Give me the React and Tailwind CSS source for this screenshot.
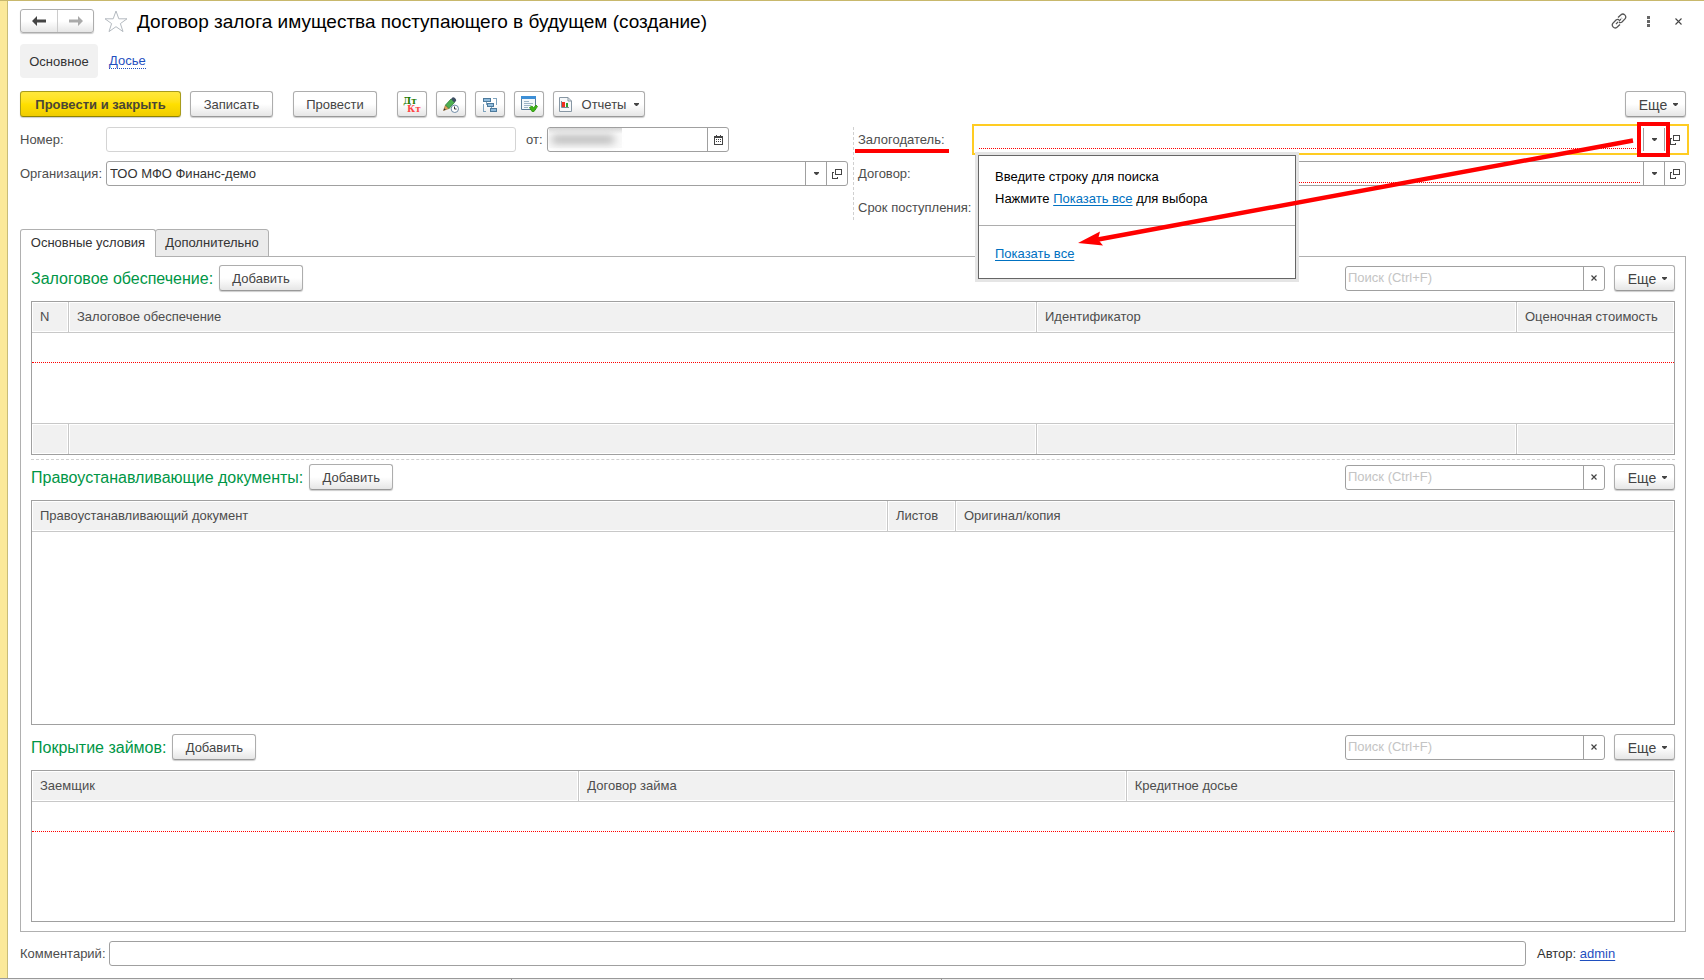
import React from 'react';
import clsx from 'clsx';

const Caret = () => (
    <svg width="5" height="3" viewBox="0 0 5 3" className="shrink-0" aria-hidden="true">
        <path d="M0 0h5v1L3 3H2L0 1z" fill="#444" />
    </svg>
);

const OpenIcon = () => (
    <svg width="10" height="10" viewBox="0 0 10 10" fill="none" stroke="#444" shapeRendering="crispEdges" aria-hidden="true">
        <path d="M3.500 .5h6v5h-6z" />
        <path d="M2 3.500H.5v6h5V7.500" />
    </svg>
);

const CalendarIcon = () => (
    <svg width="9" height="10" viewBox="0 0 9 10" shapeRendering="crispEdges" aria-hidden="true">
        <path d="M.5 1.500h8v8h-8z" fill="#fff" stroke="#444" />
        <path d="M0 1h9v2H0zM2 0h1v1H2zM6 0h1v1H6z" fill="#444" />
        <path d="M2 4h1v1H2zM4 4h1v1H4zM6 4h1v1H6zM2 6h1v1H2zM4 6h1v1H4zM6 6h1v1H6z" fill="#444" />
    </svg>
);

const PencilIcon = () => (
    <svg width="16" height="16" viewBox="0 0 16 16" aria-hidden="true">
        <path d="M.5 13.500 2.500 8l3.500 3.500z" fill="#d9a35c" stroke="#9a6a2c" strokeWidth=".6" />
        <path d="M.5 13.500l.8-2.200 1.500 1.500z" fill="#333" />
        <path d="M2.500 8 8 2l3.500 3.500-5.500 6z" fill="#4caf50" stroke="#2b7a3a" strokeWidth=".8" />
        <path d="M8 2 9.500.5c1.500-.8 4.500 2 3.500 3.500L11.500 5.500z" fill="#3d4f63" />
        <circle cx="11.800" cy="11.800" r="3.700" fill="#fff" stroke="#6f8aa5" />
        <path d="M11.500 9.500v2.500h2" fill="none" stroke="#333" />
    </svg>
);

const StructureIcon = () => (
    <svg width="16" height="16" viewBox="0 0 16 16" fill="none" shapeRendering="crispEdges" aria-hidden="true">
        <path d="M4.500 4v4M9.500 9v4M4.500 7.500H6M9 12.500h1M11 1.500h3.500V8M4 14.500H1.500V7" stroke="#7fa3bd" />
        <path d="M1.500 1.500h7v3h-7zM5.500 6.500h6v3h-6zM8.500 11.500h6v3h-6z" fill="#8fbbdc" stroke="#4d7a9c" />
    </svg>
);

const TaskIcon = () => (
    <svg width="17" height="17" viewBox="0 0 17 17" aria-hidden="true">
        <path d="M.5 .5h14v13H.5z" fill="#f4f8fb" stroke="#5c7c96" />
        <path d="M0 0h15v3H0z" fill="#3d8fd6" />
        <path d="M3 5.500h5M3 7.500h9M3 9.500h7M3 11.500h4" stroke="#9db4c6" />
        <path d="M8.500 11.500 11 10l1.500 2L15 9l1.500 1.500-3.500 5h-2z" fill="#3fb618" stroke="#2a8f0c" strokeWidth=".8" />
    </svg>
);

const ReportIcon = () => (
    <svg width="13" height="15" viewBox="0 0 13 15" aria-hidden="true">
        <path d="M.5 .5H9l3.500 3.500v10.500H.5z" fill="#f6f8fa" stroke="#8796a3" />
        <path d="M9 .5V4h3.500" fill="none" stroke="#8796a3" />
        <path d="M2.500 4v6.500H10" fill="none" stroke="#7a8894" />
        <path d="M3 5h3v5H3z" fill="#f03020" />
        <path d="M7 6h2v4H7z" fill="#2f9e2f" />
    </svg>
);

const plainButton = 'border-[#adadad] border-b-[#999] from-white from-50% to-[#e6e6e6] text-[#444]';
const primaryButton = 'border-[#a89c1c] border-b-[#8f8400] from-[#ffe83c] via-[#ffe000] to-[#f0cc00] font-bold text-[#4a4636]';

const Button = ({ primary, className, children, ...props }) => (
    <button
        type="button"
        className={clsx(
            'flex h-[26px] shrink-0 items-center justify-center whitespace-nowrap rounded-[3px] border bg-linear-to-b pt-px shadow-[0_1px_1px_#ccc]',
            primary ? primaryButton : plainButton,
            className
        )}
        {...props}
    >
        {children}
    </button>
);

const MoreButton = () => (
    <Button className="w-[61px] gap-[6px] pl-[6px] text-[14px]">
        Еще
        <Caret />
    </Button>
);

const FieldButton = ({ label, children }) => (
    <button
        type="button"
        aria-label={label}
        className="relative flex w-[21px] shrink-0 items-center justify-center border-l border-[#a0a0a0]"
    >
        {children}
    </button>
);

const Field = ({ className, children }) => (
    <div className={clsx('flex h-[25px] border bg-white', className)}>{children}</div>
);

const fieldBorder = 'rounded-[3px] border-[#a0a0a0]';

const Section = ({ title, id, children, className }) => (
    <section className={clsx('flex flex-col', className)}>
        <div className="mb-[10px] flex h-[26px] items-center">
            <h2 className="pt-px text-[16px] text-[#009646]">{title}</h2>
            <Button className="ml-[6px] w-[84px]">Добавить</Button>
            <Field className={clsx(fieldBorder, 'ml-auto w-[260px]')}>
                <input
                    id={id}
                    aria-label={`Поиск: ${title}`}
                    placeholder="Поиск (Ctrl+F)"
                    className="min-w-0 flex-1 px-[2px] outline-none placeholder:text-[#c4c4c4]"
                />
                <FieldButton label="Очистить">
                    <svg width="6" height="6" viewBox="0 0 6 6" aria-hidden="true">
                        <path d="M.5 .5l5 5M5.500 .5l-5 5" stroke="#444" strokeWidth="1.200" />
                    </svg>
                </FieldButton>
            </Field>
            <div className="ml-[9px]">
                <MoreButton />
            </div>
        </div>
        {children}
    </section>
);

// Таблица с шапкой, пустой обязательной строкой и необязательным подвалом
const DataTable = ({ columns, required, footer, className }) => {
    const cell = 'bg-[#f1f1f1] shadow-[inset_0_0_0_1px_#fff] border-[#c8c8c8] not-last:border-r';
    return (
        <div className={clsx('border border-[#a0a0a0]', className)}>
            <table className="h-full w-full table-fixed border-separate border-spacing-0">
                <thead>
                    <tr>
                        {columns.map((col) => (
                            <th
                                key={col.name}
                                scope="col"
                                className={clsx(cell, 'h-[31px] truncate border-b px-2 text-left font-normal text-[#4d4d4d]', col.width)}
                            >
                                {col.name}
                            </th>
                        ))}
                    </tr>
                </thead>
                <tbody>
                    {required && (
                        <tr>
                            <td colSpan={columns.length} className="h-[30px] border-b border-dotted border-[#f00]"></td>
                        </tr>
                    )}
                    <tr>
                        <td colSpan={columns.length}></td>
                    </tr>
                </tbody>
                {footer && (
                    <tfoot>
                        <tr>
                            {columns.map((col) => (
                                <td key={col.name} className={clsx(cell, 'h-[31px] border-t')}></td>
                            ))}
                        </tr>
                    </tfoot>
                )}
            </table>
        </div>
    );
};

const collateralColumns = [
    { name: 'N', width: 'w-[37px]' },
    { name: 'Залоговое обеспечение' },
    { name: 'Идентификатор', width: 'w-[480px]' },
    { name: 'Оценочная стоимость', width: 'w-[157px]' },
];

const documentColumns = [
    { name: 'Правоустанавливающий документ' },
    { name: 'Листов', width: 'w-[68px]' },
    { name: 'Оригинал/копия', width: 'w-[718px]' },
];

const loanColumns = [
    { name: 'Заемщик', width: 'w-1/3' },
    { name: 'Договор займа', width: 'w-1/3' },
    { name: 'Кредитное досье' },
];

const Header = () => (
    <header className="flex h-6 items-center">
        <div className="flex h-6 rounded-[3px] border border-[#adadad] bg-linear-to-b from-white from-50% to-[#e6e6e6] shadow-[0_1px_1px_#ccc]">
            <button type="button" aria-label="Назад" className="flex w-9 items-center justify-center">
                <svg width="14" height="10" viewBox="0 0 14 10" aria-hidden="true">
                    <path d="M5 0v3.500h9v3H5V10L0 5z" fill="#444" />
                </svg>
            </button>
            <button type="button" aria-label="Вперед" className="flex w-9 items-center justify-center border-l border-[#ccc]">
                <svg width="14" height="10" viewBox="0 0 14 10" aria-hidden="true">
                    <path d="M9 0v3.500H0v3h9V10l5-5z" fill="#aaa" />
                </svg>
            </button>
        </div>
        <button type="button" aria-label="В избранное" className="ml-[10px]">
            <svg width="24" height="23" viewBox="0 0 24 23" fill="#fff" stroke="#b4bac0" aria-hidden="true">
                <path d="M12 1l2.800 7.800h8.200l-6.600 4.800 2.600 8L12 16.700l-7 4.900 2.600-8L1 8.800h8.200z" />
            </svg>
        </button>
        <h1 className="ml-[9px] pt-[2px] whitespace-nowrap text-[19px] text-black">Договор залога имущества поступающего в будущем (создание)</h1>
        <div className="ml-auto flex items-center pr-1">
            <button type="button" aria-label="Ссылка">
                <svg width="16" height="16" viewBox="0 0 16 16" fill="none" stroke="#555" strokeWidth="1.300" aria-hidden="true">
                    <path d="M7 4.500 10 1.700c2.600-2 6 1.200 4.200 4L11 9c-1 .8-2 .8-3 .4" />
                    <path d="M9 11.500 6 14.300c-2.600 2-6-1.200-4.200-4L5 7c1-.8 2-.8 3-.4" />
                    <path d="M5 11l6-6" strokeDasharray="3 1" />
                </svg>
            </button>
            <button type="button" aria-label="Меню" className="ml-5">
                <svg width="3" height="11" viewBox="0 0 3 11" fill="#666" aria-hidden="true">
                    <path d="M0 0h3v3H0zM0 4h3v3H0zM0 8h3v3H0z" />
                </svg>
            </button>
            <button type="button" aria-label="Закрыть" className="ml-[25px]">
                <svg width="7" height="7" viewBox="0 0 7 7" stroke="#444" strokeWidth="1.100" aria-hidden="true">
                    <path d="M.5 .5l6 6M6.500 .5l-6 6" />
                </svg>
            </button>
        </div>
    </header>
);

const Toolbar = () => (
    <div className="mt-[13px] flex items-center">
        <Button primary className="w-[161px]">Провести и закрыть</Button>
        <Button className="ml-[9px] w-[83px]">Записать</Button>
        <Button className="ml-5 w-[84px]">Провести</Button>
        <div className="ml-5 flex gap-[9px]">
            <Button aria-label="Движения документа" className="w-[30px]">
                <span className="font-['DejaVu_Serif',serif] text-[9px] leading-[8px] font-bold">
                    <span className="block pr-1 text-[#217a00]">Дт</span>
                    <span className="block pl-1 text-[#f44]">Кт</span>
                </span>
            </Button>
            <Button aria-label="Редактировать" className="w-[30px]">
                <PencilIcon />
            </Button>
            <Button aria-label="Структура подчиненности" className="w-[30px]">
                <StructureIcon />
            </Button>
            <Button aria-label="Задачи" className="w-[30px]">
                <TaskIcon />
            </Button>
            <Button className="w-[92px] gap-2">
                <ReportIcon />
                <span className="pl-[2px]">Отчеты</span>
                <Caret />
            </Button>
        </div>
        <div className="ml-auto">
            <MoreButton />
        </div>
    </div>
);

const SearchPopup = () => (
    <div className="absolute top-[27px] left-[2px] z-10 w-[318px] border border-[#666] bg-white text-black ring-3 ring-[#e5e5e5]">
        <div className="h-[70px] border-b border-[#adadad] px-4 pt-[10px] leading-[22px]">
            <p>Введите строку для поиска</p>
            <p>
                Нажмите <a href="#all" className="text-[#0071c1] underline underline-offset-2">Показать все</a> для выбора
            </p>
        </div>
        <div className="flex h-[52px] items-center px-4 pt-1">
            <a href="#all" className="text-[#0071c1] underline underline-offset-2">Показать все</a>
        </div>
    </div>
);

const RightFields = () => (
    <div className="relative flex flex-1 flex-col gap-[9px] border-l border-dashed border-[#d0d0d0] pl-1">
        <div className="flex items-center">
            <div className="w-[117px] shrink-0">
                <label htmlFor="pledger" className="relative">
                    Залогодатель:
                    <span className="absolute top-[17px] -left-[3px] h-1 w-[94px] bg-[#f00]"></span>
                </label>
            </div>
            <Field className="relative flex-1 border-transparent outline-2 outline-offset-1 outline-[#fc2]">
                <input id="pledger" className="mr-[3px] mb-[2px] ml-[3px] min-w-0 flex-1 border-b border-dotted border-[#f00] outline-none" />
                <FieldButton label="Выбрать залогодателя">
                    <Caret />
                    <span className="absolute -top-[6px] -right-[6px] -bottom-[6px] -left-[7px] border-4 border-[#f00]"></span>
                </FieldButton>
                <FieldButton label="Открыть залогодателя">
                    <OpenIcon />
                </FieldButton>
                <SearchPopup />
            </Field>
        </div>
        <div className="flex items-center">
            <label htmlFor="contract" className="w-[117px] shrink-0">Договор:</label>
            <Field className={clsx(fieldBorder, 'flex-1')}>
                <input id="contract" className="mr-[3px] mb-[2px] ml-[3px] min-w-0 flex-1 border-b border-dotted border-[#f00] outline-none" />
                <FieldButton label="Выбрать договор">
                    <Caret />
                </FieldButton>
                <FieldButton label="Открыть договор">
                    <OpenIcon />
                </FieldButton>
            </Field>
        </div>
        <div className="flex h-[25px] items-center">Срок поступления:</div>
        {/* стрелка от кнопки выбора к ссылке «Показать все» */}
        <svg width="556" height="110" viewBox="0 0 556 110" className="pointer-events-none absolute top-[10px] right-[52px] z-20" aria-hidden="true">
            <path d="M555 3.500 20 102.500" stroke="#f00" strokeWidth="4.500" />
            <path d="M0 106 22 94.500 20 102.500 25 108.500z" fill="#f00" />
        </svg>
    </div>
);

const LeftFields = () => (
    <div className="flex flex-1 flex-col gap-[9px] pr-[5px]">
        <div className="flex items-center">
            <label htmlFor="number" className="w-[86px] shrink-0">Номер:</label>
            <Field className="w-[410px] rounded-[3px] border-[#d4d4d4]">
                <input id="number" className="min-w-0 flex-1 px-[3px] outline-none" />
            </Field>
            <label htmlFor="date" className="ml-[10px] w-[21px] shrink-0">от:</label>
            <Field className={clsx(fieldBorder, 'w-[182px]')}>
                <div className="relative flex min-w-0 flex-1">
                    <span className="absolute top-0 left-px h-5 w-[73px] bg-linear-to-b from-[#d8d8d8] to-[#fafafa] to-30%"></span>
                    <span className="absolute top-2 left-1 h-[7px] w-[62px] bg-[#aaa] blur-[4px]"></span>
                    <input id="date" className="relative min-w-0 flex-1 px-[3px] outline-none" />
                </div>
                <FieldButton label="Календарь">
                    <CalendarIcon />
                </FieldButton>
            </Field>
        </div>
        <div className="flex items-center">
            <label htmlFor="organization" className="w-[86px] shrink-0">Организация:</label>
            <Field className={clsx(fieldBorder, 'flex-1')}>
                <input id="organization" defaultValue="ТОО МФО Финанс-демо" className="min-w-0 flex-1 px-[3px] text-[#333] outline-none" />
                <FieldButton label="Выбрать организацию">
                    <Caret />
                </FieldButton>
                <FieldButton label="Открыть организацию">
                    <OpenIcon />
                </FieldButton>
            </Field>
        </div>
    </div>
);

const App = () => {
    return (
        <div className="flex min-h-screen flex-col bg-white font-['Liberation_Sans',Arial,sans-serif] text-[13px] leading-[18px] text-[#4d4d4d]">
            <div className="flex flex-1 border-t border-[#c8b86c]">
                <div className="w-2 shrink-0 border-r border-[#c8bc78] bg-[#fbe99a]"></div>
                <main className="flex min-w-0 flex-1 flex-col pt-2 pr-[18px] pb-3 pl-3">
                    <Header />
                    <nav className="mt-[11px] flex h-[34px] items-center text-[#333]">
                        <a href="#main" className="flex h-full w-[78px] items-center justify-center rounded-[4px] bg-[#f1f1f1] pt-px">Основное</a>
                        <a href="#dossier" className="ml-[11px] border-b border-dotted border-[#1f4fbf] pt-px leading-[14px] text-[#1f4fbf]">Досье</a>
                    </nav>
                    <Toolbar />
                    <div className="mt-[10px] flex">
                        <LeftFields />
                        <RightFields />
                    </div>

                    <div role="tablist" className="mt-[9px] flex h-7 text-[#333]">
                        <button type="button" role="tab" aria-selected="true" className="z-1 w-[136px] rounded-t-[3px] border border-b-0 border-[#b0b0b0] bg-white pb-[2px]">
                            Основные условия
                        </button>
                        <button type="button" role="tab" aria-selected="false" className="-ml-px w-[114px] rounded-t-[3px] border border-[#b0b0b0] bg-[#ebebeb]">
                            Дополнительно
                        </button>
                    </div>
                    <div className="-mt-px flex flex-1 flex-col border border-[#b0b0b0] px-[10px] pt-2 pb-[9px]">
                        <Section title="Залоговое обеспечение:" id="search-collateral">
                            <DataTable columns={collateralColumns} required footer className="h-[154px]" />
                        </Section>
                        <div className="mt-1 mb-1 border-t border-dashed border-[#d0d0d0]"></div>
                        <Section title="Правоустанавливающие документы:" id="search-documents" className="mb-[9px] flex-1">
                            <DataTable columns={documentColumns} className="flex min-h-[160px] flex-1" />
                        </Section>
                        <Section title="Покрытие займов:" id="search-loans">
                            <DataTable columns={loanColumns} required className="h-[152px]" />
                        </Section>
                    </div>

                    <div className="mt-[9px] flex items-center">
                        <label htmlFor="comment" className="w-[89px] shrink-0">Комментарий:</label>
                        <Field className={clsx(fieldBorder, 'flex-1')}>
                            <input id="comment" className="min-w-0 flex-1 px-[3px] outline-none" />
                        </Field>
                        <div className="w-[160px] shrink-0 pl-[11px] text-[#333]">
                            Автор: <a href="#admin" className="text-[#1f4fbf] underline underline-offset-2">admin</a>
                        </div>
                    </div>
                </main>
            </div>
            <footer className="flex h-[2px] border-t border-[#999] bg-[#eee]">
                <div className="w-[512px] border-r border-[#999]"></div>
                <div className="w-[430px] border-r border-[#999]"></div>
            </footer>
        </div>
    );
};

export default App;
